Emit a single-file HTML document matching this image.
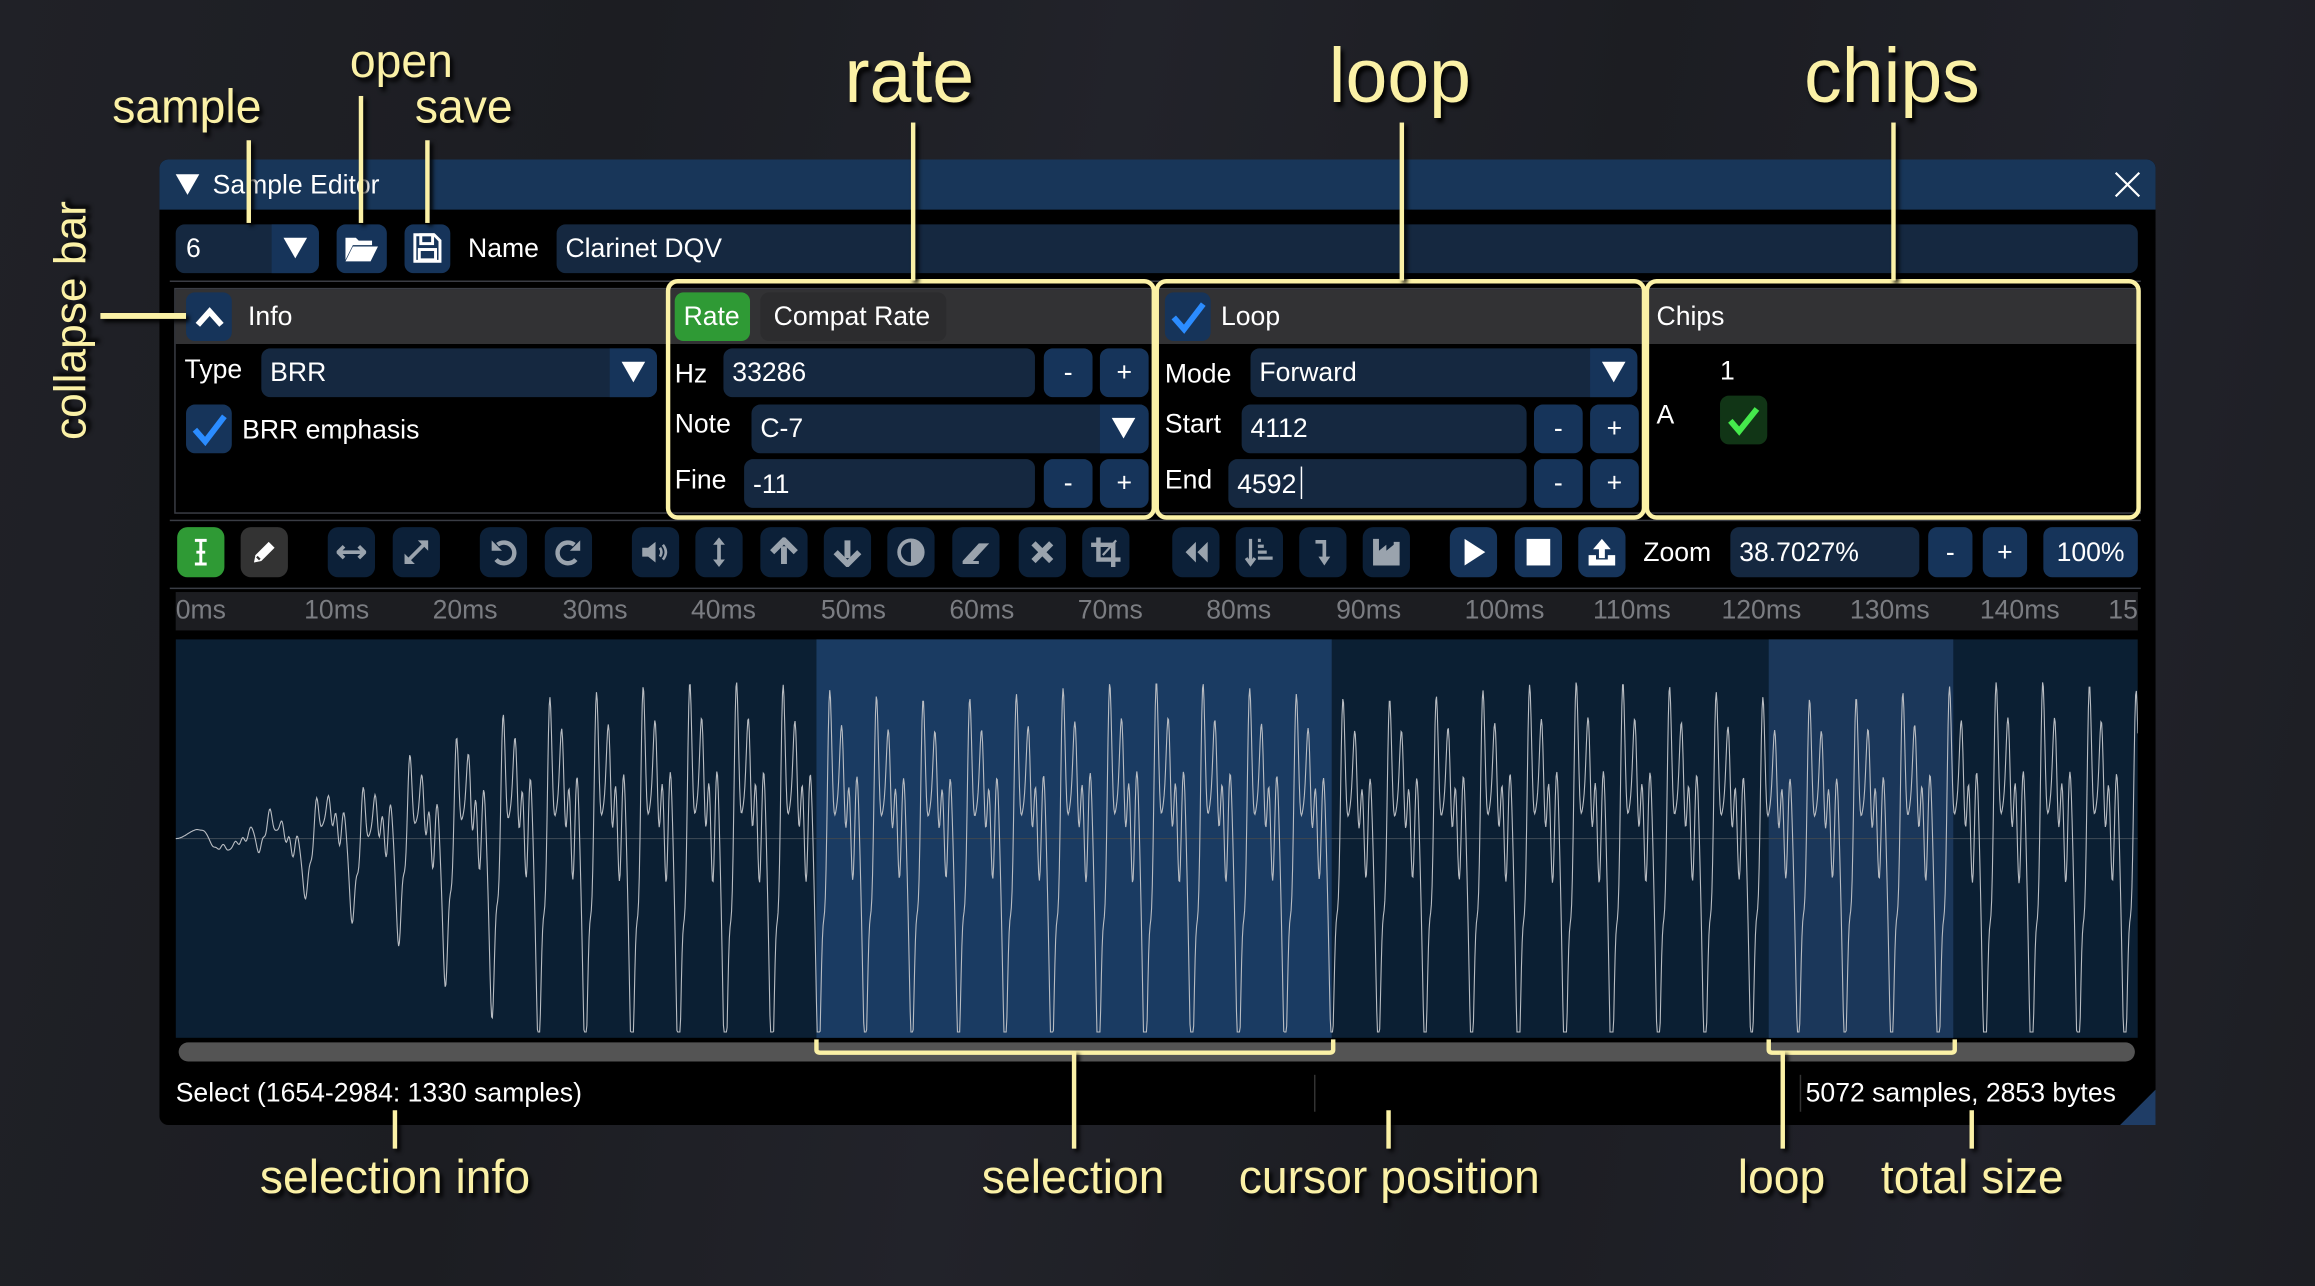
<!DOCTYPE html>
<html><head><meta charset="utf-8"><style>
*{box-sizing:border-box;margin:0;padding:0}
html,body{width:2315px;height:1286px;overflow:hidden;background:#1e1f24}
#s{position:absolute;left:0;top:0;width:1568px;height:871px;transform:scale(1.47640);transform-origin:0 0;
background:linear-gradient(100deg,#202127 0%,#1c1d22 25%,#22232a 45%,#1c1d22 65%,#21222a 85%,#1d1e23 100%);
font-family:"Liberation Sans",sans-serif;color:#fff;font-size:18px}
.a{position:absolute}
.lab{position:absolute;color:#fbf1a6;text-shadow:2px 3px 3px #000;white-space:nowrap;transform:scaleX(.98);transform-origin:0 0}
.yl{position:absolute;background:#fbf1a6;box-shadow:2px 2px 3px #000}
.t{position:absolute;white-space:nowrap;font-size:18px}
.inp{position:absolute;background:#152840;border-radius:6px}
.btn{position:absolute;background:#16345a;border-radius:6px;color:#fff;text-align:center}
.tb{position:absolute;top:357px;width:32px;height:34px;border-radius:7px;background:#0c2038}
.tb svg{position:absolute;left:6px;top:7px;width:20px;height:20px}
.box{position:absolute;border:3px solid #fbf1a6;border-radius:8px}
.rl{position:absolute;top:403px;color:#7b7d82;font-size:18px}
</style></head><body><div id="s">

<div class="a" style="left:108px;top:108px;width:1352px;height:654px;background:#000;border-radius:6px"></div>
<div class="a" style="left:108px;top:108px;width:1352px;height:34px;background:#183659;border-radius:6px 6px 0 0"></div>
<svg class="a" style="left:118px;top:117px" width="18" height="16"><path d="M1 1H17L9 15Z" fill="#fff"/></svg>
<div class="t" style="left:144px;top:115px">Sample Editor</div>
<svg class="a" style="left:1432px;top:116px" width="18" height="18"><path d="M1 1L17 17M17 1L1 17" stroke="#fff" stroke-width="1.5"/></svg>
<svg class="a" style="left:1434px;top:738px" width="26" height="24"><path d="M26 0V24H2Z" fill="#1f3d66"/></svg>

<div class="inp" style="left:119px;top:152px;width:97px;height:33px"></div>
<div class="a" style="left:184px;top:152px;width:32px;height:33px;background:#16345a;border-radius:0 6px 6px 0"></div>
<svg class="a" style="left:191px;top:160px" width="18" height="16"><path d="M1 1H17L9 15Z" fill="#fff"/></svg>
<div class="t" style="left:126px;top:158px">6</div>
<div class="btn" style="left:228px;top:152px;width:34px;height:33px"></div>
<svg class="a" style="left:233px;top:158px" width="24" height="20"><path d="M1 3H8L10 5H19V8H6L1 18Z" fill="#fff"/><path d="M6 9H23L18 19H1Z" fill="#fff"/></svg>
<div class="btn" style="left:274px;top:152px;width:31px;height:33px"></div>
<svg class="a" style="left:279px;top:157px" width="21" height="22"><path d="M2 2H15L19 6V20H2Z" fill="none" stroke="#fff" stroke-width="2"/><rect x="6" y="2" width="8" height="6" fill="none" stroke="#fff" stroke-width="2"/><rect x="5" y="12" width="11" height="7" fill="none" stroke="#fff" stroke-width="2"/></svg>
<div class="t" style="left:317px;top:158px">Name</div>
<div class="inp" style="left:377px;top:152px;width:1071px;height:33px"></div>
<div class="t" style="left:383px;top:158px">Clarinet DQV</div>
<div class="a" style="left:115px;top:190px;width:1335px;height:1px;background:#3a3d45"></div>

<div class="a" style="left:118px;top:195px;width:1332px;height:153px;border:1px solid #3a3d45"></div>
<div class="a" style="left:119px;top:196px;width:1330px;height:37px;background:#323234"></div>
<div class="btn" style="left:126px;top:198px;width:31px;height:33px"></div>
<svg class="a" style="left:131px;top:206px" width="22" height="16"><path d="M3 14L11 5L19 14" fill="none" stroke="#fff" stroke-width="4"/></svg>
<div class="t" style="left:168px;top:204px">Info</div>
<div class="t" style="left:125px;top:240px">Type</div>
<div class="inp" style="left:177px;top:236px;width:268px;height:33px"></div>
<div class="a" style="left:413px;top:236px;width:32px;height:33px;background:#16345a;border-radius:0 6px 6px 0"></div>
<svg class="a" style="left:420px;top:244px" width="18" height="16"><path d="M1 1H17L9 15Z" fill="#fff"/></svg>
<div class="t" style="left:183px;top:242px">BRR</div>
<div class="a" style="left:126px;top:274px;width:31px;height:33px;background:#16345a;border-radius:6px"></div>
<svg class="a" style="left:129px;top:279px" width="26" height="24"><path d="M3 12L10 20L23 3" fill="none" stroke="#2b8cff" stroke-width="4"/></svg>
<div class="t" style="left:164px;top:281px">BRR emphasis</div>
<div class="a" style="left:457px;top:198px;width:51px;height:33px;background:#2f9a35;border-radius:6px"></div>
<div class="t" style="left:463px;top:204px">Rate</div>
<div class="a" style="left:515px;top:198px;width:126px;height:33px;background:#2c2c2e;border-radius:6px"></div>
<div class="t" style="left:524px;top:204px">Compat Rate</div>
<div class="t" style="left:457px;top:243px">Hz</div>
<div class="inp" style="left:490px;top:236px;width:211px;height:33px"></div>
<div class="t" style="left:496px;top:242px">33286</div>
<div class="btn" style="left:707px;top:236px;width:33px;height:33px;line-height:33px">-</div>
<div class="btn" style="left:745px;top:236px;width:33px;height:33px;line-height:33px">+</div>
<div class="t" style="left:457px;top:277px">Note</div>
<div class="inp" style="left:509px;top:274px;width:269px;height:33px"></div>
<div class="a" style="left:745px;top:274px;width:33px;height:33px;background:#16345a;border-radius:0 6px 6px 0"></div>
<svg class="a" style="left:752px;top:282px" width="18" height="16"><path d="M1 1H17L9 15Z" fill="#fff"/></svg>
<div class="t" style="left:515px;top:280px">C-7</div>
<div class="t" style="left:457px;top:315px">Fine</div>
<div class="inp" style="left:504px;top:311px;width:197px;height:33px"></div>
<div class="t" style="left:510px;top:318px">-11</div>
<div class="btn" style="left:707px;top:311px;width:33px;height:33px;line-height:33px">-</div>
<div class="btn" style="left:745px;top:311px;width:33px;height:33px;line-height:33px">+</div>
<div class="a" style="left:789px;top:198px;width:31px;height:33px;background:#16345a;border-radius:6px"></div>
<svg class="a" style="left:792px;top:203px" width="26" height="24"><path d="M3 12L10 20L23 3" fill="none" stroke="#2b8cff" stroke-width="4"/></svg>
<div class="t" style="left:827px;top:204px">Loop</div>
<div class="t" style="left:789px;top:243px">Mode</div>
<div class="inp" style="left:847px;top:236px;width:262px;height:33px"></div>
<div class="a" style="left:1077px;top:236px;width:32px;height:33px;background:#16345a;border-radius:0 6px 6px 0"></div>
<svg class="a" style="left:1084px;top:244px" width="18" height="16"><path d="M1 1H17L9 15Z" fill="#fff"/></svg>
<div class="t" style="left:853px;top:242px">Forward</div>
<div class="t" style="left:789px;top:277px">Start</div>
<div class="inp" style="left:841px;top:274px;width:193px;height:33px"></div>
<div class="t" style="left:847px;top:280px">4112</div>
<div class="btn" style="left:1039px;top:274px;width:33px;height:33px;line-height:33px">-</div>
<div class="btn" style="left:1077px;top:274px;width:33px;height:33px;line-height:33px">+</div>
<div class="t" style="left:789px;top:315px">End</div>
<div class="inp" style="left:832px;top:311px;width:202px;height:33px"></div>
<div class="t" style="left:838px;top:318px">4592</div>
<div class="a" style="left:881px;top:316px;width:1px;height:22px;background:#fff"></div>
<div class="btn" style="left:1039px;top:311px;width:33px;height:33px;line-height:33px">-</div>
<div class="btn" style="left:1077px;top:311px;width:33px;height:33px;line-height:33px">+</div>
<div class="t" style="left:1122px;top:204px">Chips</div>
<div class="t" style="left:1165px;top:241px">1</div>
<div class="t" style="left:1122px;top:271px">A</div>
<div class="a" style="left:1165px;top:268px;width:32px;height:33px;background:#113516;border-radius:6px"></div>
<svg class="a" style="left:1168px;top:273px" width="26" height="24"><path d="M4 12L10 19L22 4" fill="none" stroke="#45e94c" stroke-width="4"/></svg>
<div class="a" style="left:115px;top:352px;width:1335px;height:1px;background:#3a3d45"></div>

<div class="tb" style="left:120px;background:#2f9a35"><svg viewBox="0 0 20 20"><path d="M6 2H14M6 18H14M10 2V18M7 10H13" stroke="#fff" stroke-width="2" fill="none"/></svg></div>
<div class="tb" style="left:163px;background:#333"><svg viewBox="0 0 20 20"><path d="M3 17L4 12L13 3L17 7L8 16Z" fill="#fff"/><path d="M5 13L7 15" stroke="#333" stroke-width="1.5"/></svg></div>
<div class="tb" style="left:222px"><svg viewBox="0 0 20 20"><path d="M2 10H18M5 6L1 10L5 14M15 6L19 10L15 14" stroke="#9aa3ad" stroke-width="2.5" fill="none"/></svg></div>
<div class="tb" style="left:266px"><svg viewBox="0 0 20 20"><path d="M4 16L16 4" stroke="#9aa3ad" stroke-width="2.5"/><path d="M11 2H18V9ZM2 11V18H9Z" fill="#9aa3ad"/></svg></div>
<div class="tb" style="left:325px"><svg viewBox="0 0 20 20"><path d="M6 5A7 7 0 1 1 5 15" stroke="#9aa3ad" stroke-width="3" fill="none"/><path d="M2 2V9H9Z" fill="#9aa3ad"/></svg></div>
<div class="tb" style="left:369px"><svg viewBox="0 0 20 20"><path d="M14 5A7 7 0 1 0 15 15" stroke="#9aa3ad" stroke-width="3" fill="none"/><path d="M18 2V9H11Z" fill="#9aa3ad"/></svg></div>
<div class="tb" style="left:428px"><svg viewBox="0 0 20 20"><path d="M1 7H5L10 3V17L5 13H1Z" fill="#9aa3ad"/><path d="M13 7Q15 10 13 13M15 5Q19 10 15 15" stroke="#9aa3ad" stroke-width="1.8" fill="none"/></svg></div>
<div class="tb" style="left:471px"><svg viewBox="0 0 20 20"><path d="M10 3V17" stroke="#9aa3ad" stroke-width="2.5"/><path d="M6 5L10 0L14 5ZM6 15L10 20L14 15Z" fill="#9aa3ad"/></svg></div>
<div class="tb" style="left:515px"><svg viewBox="0 0 20 20"><path d="M10 18V6" stroke="#9aa3ad" stroke-width="4"/><path d="M2 10L10 2L18 10" stroke="#9aa3ad" stroke-width="4" fill="none"/></svg></div>
<div class="tb" style="left:558px"><svg viewBox="0 0 20 20"><path d="M10 2V14" stroke="#9aa3ad" stroke-width="4"/><path d="M2 10L10 18L18 10" stroke="#9aa3ad" stroke-width="4" fill="none"/></svg></div>
<div class="tb" style="left:601px"><svg viewBox="0 0 20 20"><circle cx="10" cy="10" r="8" stroke="#9aa3ad" stroke-width="2.5" fill="none"/><path d="M10 2A8 8 0 0 1 10 18Z" fill="#9aa3ad"/></svg></div>
<div class="tb" style="left:645px"><svg viewBox="0 0 20 20"><path d="M1 16L12 4H19L8 16Z" fill="#9aa3ad"/><path d="M1 17H12" stroke="#9aa3ad" stroke-width="2"/></svg></div>
<div class="tb" style="left:690px"><svg viewBox="0 0 20 20"><path d="M4 4L16 16M16 4L4 16" stroke="#9aa3ad" stroke-width="4"/></svg></div>
<div class="tb" style="left:733px"><svg viewBox="0 0 20 20"><path d="M5 0V15H20M0 5H15V20" stroke="#9aa3ad" stroke-width="3" fill="none"/><path d="M17 2L8 12" stroke="#9aa3ad" stroke-width="1.5"/></svg></div>
<div class="tb" style="left:794px"><svg viewBox="0 0 20 20"><path d="M10 3L3 10L10 17ZM18 3L11 10L18 17Z" fill="#9aa3ad"/></svg></div>
<div class="tb" style="left:837px"><svg viewBox="0 0 20 20"><path d="M4 1V18M1 14L4 18L7 14M9 2H11M9 6H13M9 10H15M9 14H19" stroke="#9aa3ad" stroke-width="2.2" fill="none"/></svg></div>
<div class="tb" style="left:880px"><svg viewBox="0 0 20 20"><path d="M5 3H11V15" stroke="#9aa3ad" stroke-width="2.5" fill="none"/><path d="M7 13H15L11 19Z" fill="#9aa3ad"/></svg></div>
<div class="tb" style="left:923px"><svg viewBox="0 0 20 20"><path d="M1 1H5V9L10 5V9L15 5V3H19V19H1Z" fill="#9aa3ad"/></svg></div>
<div class="tb" style="left:982px;background:#16345a"><svg viewBox="0 0 20 20"><path d="M4 1L18 10L4 19Z" fill="#fff"/></svg></div>
<div class="tb" style="left:1026px;background:#16345a"><svg viewBox="0 0 20 20"><rect x="2" y="1" width="16" height="18" fill="#fff"/></svg></div>
<div class="tb" style="left:1069px;background:#16345a"><svg viewBox="0 0 20 20"><path d="M10 1L4 8H8V14H12V8H16Z" fill="#fff"/><path d="M1 12H6V15H14V12H19V19H1Z" fill="#fff"/></svg></div>
<div class="t" style="left:1113px;top:364px">Zoom</div>
<div class="inp" style="left:1172px;top:357px;width:128px;height:34px"></div>
<div class="t" style="left:1178px;top:364px">38.7027%</div>
<div class="btn" style="left:1306px;top:357px;width:30px;height:34px;line-height:34px">-</div>
<div class="btn" style="left:1343px;top:357px;width:30px;height:34px;line-height:34px">+</div>
<div class="btn" style="left:1384px;top:357px;width:64px;height:34px;line-height:34px">100%</div>
<div class="a" style="left:115px;top:398px;width:1335px;height:1px;background:#3a3d45"></div>

<div class="a" style="left:119px;top:401px;width:1329px;height:26px;background:#1c1d21;overflow:hidden">
<div class="rl" style="left:0;top:2px">0ms</div><div class="rl" style="left:87px;top:2px">10ms</div><div class="rl" style="left:174px;top:2px">20ms</div><div class="rl" style="left:262px;top:2px">30ms</div><div class="rl" style="left:349px;top:2px">40ms</div><div class="rl" style="left:437px;top:2px">50ms</div><div class="rl" style="left:524px;top:2px">60ms</div><div class="rl" style="left:611px;top:2px">70ms</div><div class="rl" style="left:698px;top:2px">80ms</div><div class="rl" style="left:786px;top:2px">90ms</div><div class="rl" style="left:873px;top:2px">100ms</div><div class="rl" style="left:960px;top:2px">110ms</div><div class="rl" style="left:1047px;top:2px">120ms</div><div class="rl" style="left:1134px;top:2px">130ms</div><div class="rl" style="left:1222px;top:2px">140ms</div><div class="rl" style="left:1309px;top:2px">150ms</div>
</div>

<svg class="a" style="left:119px;top:433px" width="1329" height="270">
<rect width="1329" height="270" fill="#0b1f33"/>
<rect x="434" width="349" height="270" fill="#1a3b62"/>
<rect x="1079" width="125" height="270" fill="#1b375a"/>
<line x1="0" y1="135" x2="1329" y2="135" stroke="#3a4652" stroke-width="0.8"/>
<path id="wv" fill="none" stroke="#b8bcc2" stroke-width="0.75"/>
</svg>
<script>
(function(){var d="",P=31.6;for(var i=0;i<=1329*2;i++){var x=i/2,t=x/P*2*Math.PI;
var env=x<10?0:Math.min(1,Math.pow((x-10)/230,1.4));
var v=0.55*Math.sin(t)+0.35*Math.sin(2*t+0.9)+0.35*Math.sin(3*t+2.1)+0.2*Math.sin(5*t+0.4)+0.12*Math.sin(7*t+1.3);
v*=1+0.06*Math.sin(x/47);
var lf=x<200?0.3*Math.sin(x/7.5)*Math.min(1,x/20)*(1-env):0;
var y=135-(v*env*115+lf*30);y=Math.max(4,Math.min(266,y));
d+=(i?"L":"M")+x.toFixed(1)+" "+y.toFixed(1);}
document.getElementById("wv").setAttribute("d",d);})();
</script>

<div class="a" style="left:121px;top:706px;width:1325px;height:13px;background:#545454;border-radius:7px"></div>
<div class="t" style="left:119px;top:730px">Select (1654-2984: 1330 samples)</div>
<div class="a" style="left:890px;top:728px;width:1px;height:25px;background:#333"></div>
<div class="a" style="left:1219px;top:728px;width:1px;height:25px;background:#333"></div>
<div class="t" style="left:1223px;top:730px">5072 samples, 2853 bytes</div>

<div class="box" style="left:451px;top:189px;width:332px;height:163px"></div>
<div class="box" style="left:782px;top:189px;width:333px;height:163px"></div>
<div class="box" style="left:1114px;top:189px;width:336px;height:163px"></div>

<div class="yl" style="left:167px;top:95px;width:3px;height:56px"></div>
<div class="yl" style="left:243px;top:65px;width:3px;height:86px"></div>
<div class="yl" style="left:288px;top:95px;width:3px;height:56px"></div>
<div class="yl" style="left:617px;top:83px;width:3px;height:107px"></div>
<div class="yl" style="left:948px;top:83px;width:3px;height:107px"></div>
<div class="yl" style="left:1281px;top:83px;width:3px;height:107px"></div>
<div class="yl" style="left:68px;top:212px;width:58px;height:4px"></div>
<svg class="a" style="left:550px;top:703px" width="356" height="14"><path d="M3 1V8Q3 10 6 10H350Q353 10 353 8V1" fill="none" stroke="#fbf1a6" stroke-width="3"/></svg>
<svg class="a" style="left:1195px;top:703px" width="132" height="14"><path d="M3 1V8Q3 10 6 10H126Q129 10 129 8V1" fill="none" stroke="#fbf1a6" stroke-width="3"/></svg>
<div class="yl" style="left:726px;top:712px;width:3px;height:66px"></div>
<div class="yl" style="left:1206px;top:712px;width:3px;height:66px"></div>
<div class="yl" style="left:266px;top:752px;width:3px;height:26px"></div>
<div class="yl" style="left:939px;top:752px;width:3px;height:26px"></div>
<div class="yl" style="left:1334px;top:752px;width:3px;height:26px"></div>

<div class="lab" style="left:76px;top:54px;font-size:32px">sample</div>
<div class="lab" style="left:237px;top:23px;font-size:32px">open</div>
<div class="lab" style="left:281px;top:54px;font-size:32px">save</div>
<div class="lab" style="left:572px;top:22px;font-size:52px">rate</div>
<div class="lab" style="left:900px;top:22px;font-size:52px">loop</div>
<div class="lab" style="left:1222px;top:22px;font-size:52px">chips</div>
<div class="lab" style="left:32px;top:298px;font-size:30px;transform:rotate(-90deg);transform-origin:0 0">collapse bar</div>
<div class="lab" style="left:176px;top:779px;font-size:32px">selection info</div>
<div class="lab" style="left:665px;top:779px;font-size:32px">selection</div>
<div class="lab" style="left:839px;top:779px;font-size:32px">cursor position</div>
<div class="lab" style="left:1177px;top:779px;font-size:32px">loop</div>
<div class="lab" style="left:1274px;top:779px;font-size:32px">total size</div>
</div></body></html>
